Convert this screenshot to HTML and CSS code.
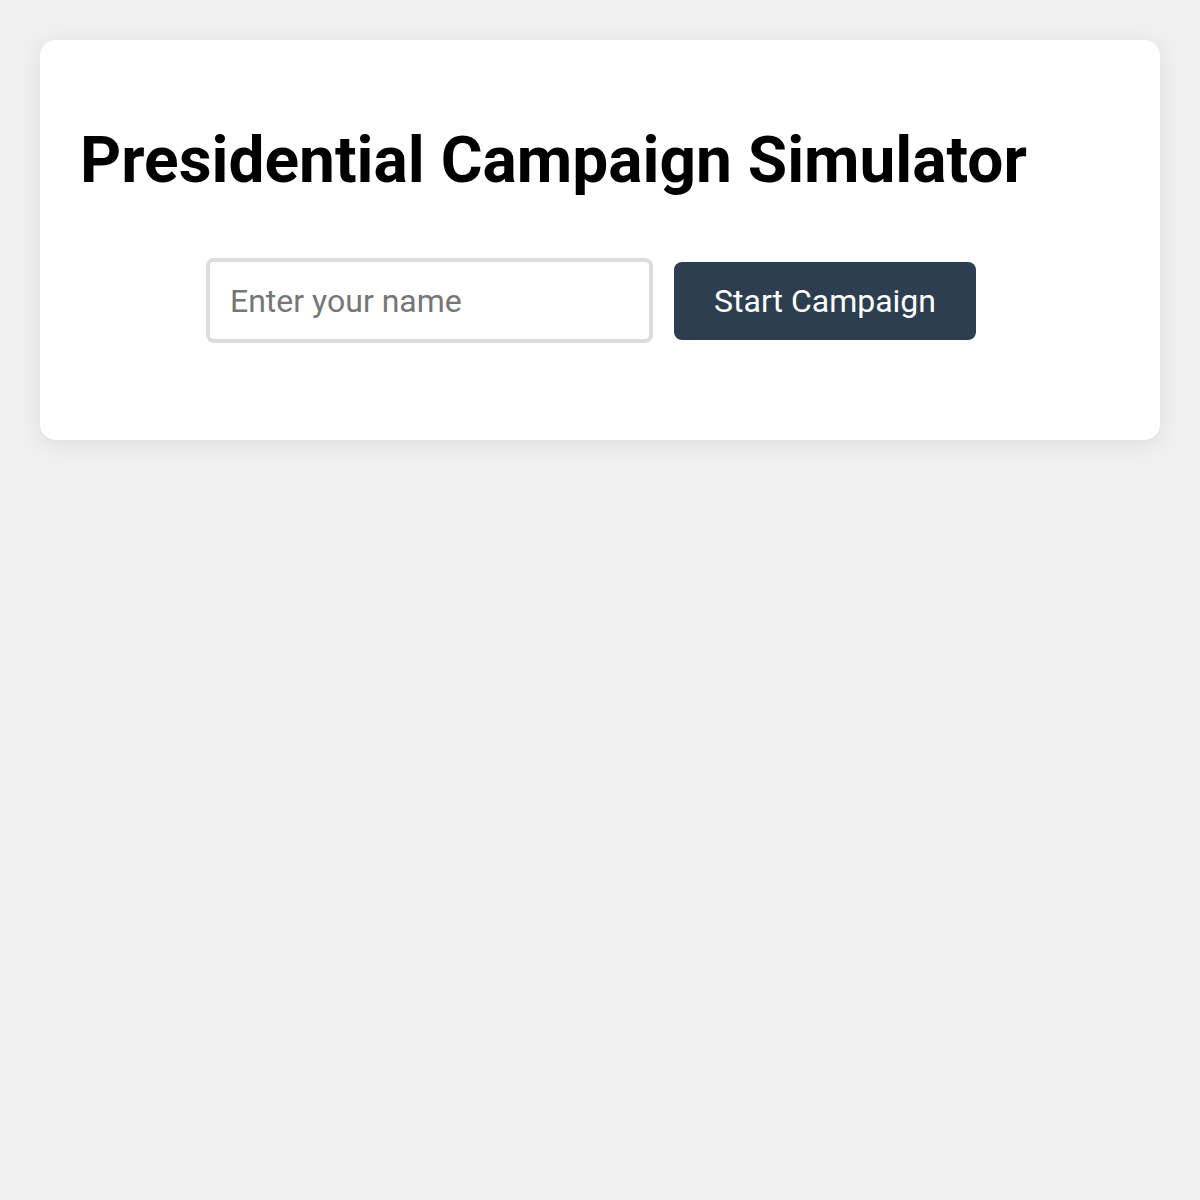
FILE: index.html
```html
<!DOCTYPE html>
<html lang="en">
<head>
<meta charset="utf-8">
<title>Presidential Campaign Simulator</title>
<link rel="stylesheet" href="styles.css">
</head>
<body>
<div class="card">
  <h1 class="title">Presidential Campaign Simulator</h1>
  <div class="start-row">
    <input class="name-input" type="text" placeholder="Enter your name">
    <button class="start-btn" type="button">Start Campaign</button>
  </div>
</div>
</body>
</html>
```
FILE: styles.css
```css
html, body {
  margin: 0;
  padding: 0;
}
body {
  background: #f0f0f0;
  font-family: Roboto, "Liberation Sans", Arial, sans-serif;
  padding: 40px;
}
.card {
  background: #ffffff;
  border-radius: 16px;
  box-shadow: 0 4px 20px rgba(0, 0, 0, 0.08);
  padding: 40px 40px 97px;
}
.title {
  font-size: 64px;
  font-weight: 700;
  color: #000;
  margin: 43px 0 60px;
  line-height: 75px;
}
.start-row {
  display: flex;
  justify-content: center;
  align-items: center;
  gap: 21px;
  padding-right: 18px;
}
.name-input {
  box-sizing: border-box;
  width: 447px;
  height: 85px;
  padding: 20px;
  border: 4px solid #dddddd;
  border-radius: 8px;
  font-family: Roboto, "Liberation Sans", Arial, sans-serif;
  font-size: 32px;
  color: #333;
  outline: none;
}
.name-input::placeholder {
  color: #767676;
}
.start-btn {
  box-sizing: border-box;
  width: 302px;
  height: 78px;
  padding: 0;
  border: none;
  border-radius: 8px;
  background: #2c3e50;
  color: #ffffff;
  font-family: Roboto, "Liberation Sans", Arial, sans-serif;
  font-size: 32px;
  cursor: pointer;
}
```
